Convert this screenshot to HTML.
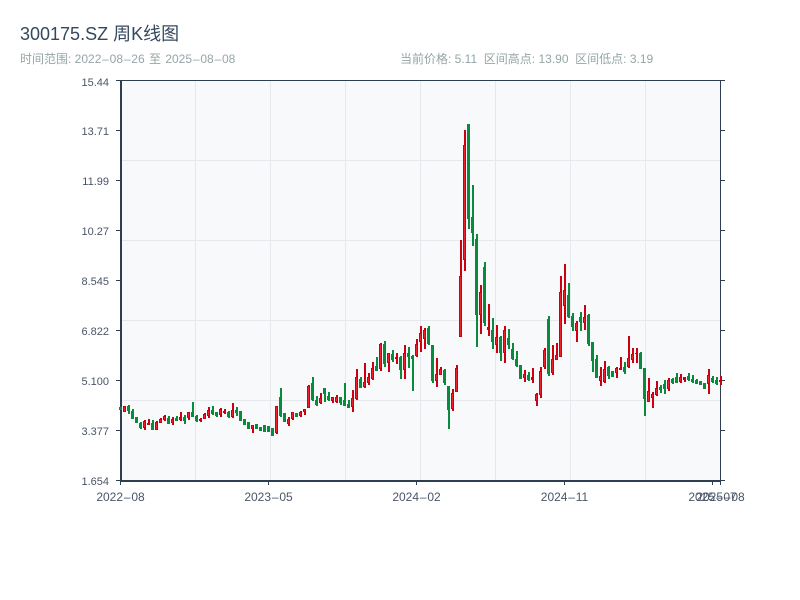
<!DOCTYPE html>
<html><head><meta charset="utf-8"><style>
html,body{margin:0;padding:0;background:#fff;width:800px;height:600px;overflow:hidden}
svg{display:block}
text{font-family:"WenQuanYi Zen Hei","Liberation Sans","Noto Sans CJK SC",sans-serif}
</style></head><body>
<svg width="800" height="600" viewBox="0 0 800 600" xmlns="http://www.w3.org/2000/svg">
<rect x="120" y="80" width="600" height="400" fill="#f7f9fb"/>
<path d="M195.500 80V480M270.500 80V480M345.500 80V480M420.500 80V480M495.500 80V480M570.500 80V480M645.500 80V480M120 160.500H720M120 240.500H720M120 320.500H720M120 400.500H720" stroke="#e5e8ed" fill="none"/>
<path d="M116 80.500H725M720.500 80V481M720 130.500H725M720 180.500H725M720 230.500H725M720 280.500H725M720 330.500H725M720 380.500H725M720 430.500H725M720 480.500H725M116 130.500H120M116 180.500H120M116 230.500H120M116 280.500H120M116 330.500H120M116 380.500H120M116 430.500H120M116 480.500H120M120.500 481V485M268.500 481V485M416.500 481V485M564.500 481V485M712.500 481V485M720.500 481V485" stroke="#2c3e50" fill="none"/>
<path d="M121 80V482M120 481H720" stroke="#2c3e50" stroke-width="2" fill="none"/>
<g fill="none">
<path stroke="#0a8a3c" stroke-width="2" d="M121 407V410M129 405V414M133 409V419M137 417V423M141 422V429M153 420V430M169 416V424M177 416V421M185 415V424M193 402V417M197 415V422M213 406V415M217 412V417M229 411V418M237 407V416M241 411V421M245 419V425M249 422V429M257 424V429M261 427V431M265 425V432M269 426V432M273 428V436M281 388V417M285 413V422M297 413V417M313 377V401M317 396V406M325 388V402M329 392V401M341 397V405M345 383V406M349 400V408M361 377V388M377 357V371M385 341V367M393 350V362M401 356V379M409 347V368M413 355V391M429 326V345M433 345V383M445 369V385M449 386V429M469 124V229M473 185V246M477 234V347M485 262V326M493 318V349M501 336V361M509 329V349M513 343V360M517 351V367M521 365V379M529 372V381M549 316V376M569 283V318M573 313V331M581 312V331M589 314V346M593 342V372M597 355V378M609 366V379M613 371V377M625 362V374M641 352V369M645 368V416M661 385V393M665 380V394M673 378V384M677 373V383M689 373V381M693 375V383M697 379V384M701 381V385M705 383V389M713 376V383M717 377V385"/>
<path stroke="#0a8a3c" stroke-width="3" d="M120.500 407V410M128.500 406V411M132.500 411V419M136.500 417V423M140.500 423V428M152.500 423V430M168.500 418V424M176.500 418V421M184.500 417V421M192.500 412V417M196.500 416V421M212.500 410V414M216.500 412V416M228.500 412V417M236.500 410V413M240.500 411V421M244.500 419V425M248.500 422V429M256.500 424V429M260.500 427V431M264.500 425V432M268.500 426V432M272.500 428V436M280.500 397V416M284.500 413V422M296.500 413V417M312.500 383V400M316.500 400V405M324.500 388V394M328.500 396V400M340.500 397V403M344.500 400V406M348.500 404V408M360.500 379V388M376.500 366V371M384.500 344V364M392.500 354V360M400.500 357V370M408.500 353V357M412.500 356V359M428.500 328V344M432.500 345V381M444.500 370V383M448.500 386V410M468.500 124V219M472.500 217V233M476.500 239V315M484.500 267V323M492.500 330V342M500.500 337V353M508.500 338V345M512.500 349V359M516.500 359V366M520.500 365V379M528.500 375V380M548.500 319V374M568.500 295V317M572.500 316V327M580.500 317V322M588.500 315V344M592.500 342V361M596.500 359V378M608.500 367V376M612.500 371V377M624.500 367V372M640.500 353V369M644.500 368V399M660.500 387V390M664.500 384V389M672.500 379V383M676.500 377V383M688.500 376V380M692.500 379V382M696.500 380V384M700.500 381V385M704.500 383V389M712.500 378V382M716.500 380V384"/>
<path stroke="#cc0010" stroke-width="2" d="M125 406V412M145 420V430M149 419V425M157 421V430M161 418V423M165 415V421M173 417V425M181 412V421M189 412V420M201 418V422M205 413V419M209 407V418M221 408V417M225 409V414M233 403V418M253 425V433M277 406V434M289 417V426M293 412V420M301 411V417M305 409V415M309 385V408M321 393V404M333 397V403M337 395V403M353 390V412M357 369V400M365 363V388M369 373V385M373 362V380M381 343V371M389 353V372M397 353V364M405 345V379M417 339V357M421 326V352M425 328V349M437 358V387M441 367V375M453 389V411M457 365V392M461 240V337M465 130V271M481 285V334M489 304V336M497 325V353M505 326V363M525 370V382M533 368V383M537 393V406M541 367V398M545 348V369M553 345V375M557 343V360M561 276V357M565 264V324M577 321V342M585 305V330M601 367V386M605 361V383M617 367V378M621 357V370M629 336V368M633 348V363M637 348V363M649 378V402M653 392V408M657 381V396M669 378V391M681 374V383M685 377V382M709 369V394M721 376V385"/>
<path stroke="#cc0010" stroke-width="3" d="M124.500 406V412M144.500 421V428M148.500 423V425M156.500 422V430M160.500 419V423M164.500 416V420M172.500 419V423M180.500 417V420M188.500 412V418M200.500 419V421M204.500 414V419M208.500 410V416M220.500 409V415M224.500 411V413M232.500 410V417M252.500 425V429M276.500 406V433M288.500 419V424M292.500 412V419M300.500 412V416M304.500 409V412M308.500 386V408M320.500 398V403M332.500 397V401M336.500 397V402M352.500 398V407M356.500 377V399M364.500 382V387M368.500 377V383M372.500 368V379M380.500 344V369M388.500 353V363M396.500 357V359M404.500 353V370M416.500 344V356M420.500 333V342M424.500 330V339M436.500 374V381M440.500 369V375M452.500 393V409M456.500 368V392M460.500 276V337M464.500 145V260M480.500 292V315M488.500 327V330M496.500 337V345M504.500 330V353M524.500 374V378M532.500 377V380M536.500 394V401M540.500 371V395M544.500 350V367M552.500 359V373M556.500 355V360M560.500 292V357M564.500 290V306M576.500 323V331M584.500 317V323M600.500 376V381M604.500 369V382M616.500 368V373M620.500 368V370M628.500 358V367M632.500 354V360M636.500 353V354M648.500 391V402M652.500 394V398M656.500 388V395M668.500 380V389M680.500 377V382M684.500 377V380M708.500 375V384M720.500 380V382"/>
<path stroke="#f0202a" stroke-width="1" d="M124.500 407V411M144.500 422V427M156.500 423V429M160.500 420V422M164.500 417V419M172.500 420V422M188.500 413V417M204.500 415V418M208.500 411V415M220.500 410V414M232.500 411V416M252.500 426V428M276.500 407V432M288.500 420V423M292.500 413V418M300.500 413V415M304.500 410V411M308.500 387V407M320.500 399V402M332.500 398V400M336.500 398V401M352.500 399V406M356.500 378V398M364.500 383V386M368.500 378V382M372.500 369V378M380.500 345V368M388.500 354V362M404.500 354V369M416.500 345V355M420.500 334V341M424.500 331V338M436.500 375V380M440.500 370V374M452.500 394V408M456.500 369V391M460.500 277V336M464.500 146V259M480.500 293V314M496.500 338V344M504.500 331V352M524.500 375V377M536.500 395V400M540.500 372V394M544.500 351V366M552.500 360V372M556.500 356V359M560.500 293V356M564.500 291V305M576.500 324V330M584.500 318V322M600.500 377V380M604.500 370V381M616.500 369V372M628.500 359V366M632.500 355V359M648.500 392V401M652.500 395V397M656.500 389V394M668.500 381V388M680.500 378V381M708.500 376V383"/>
</g>
<text x="20" y="40" font-size="18" fill="#34495e">300175.SZ 周K线图</text>
<text x="20" y="63" font-size="12" fill="#95a5a6">时间范围: 2022<tspan dx="0.8">–</tspan><tspan dx="0.8">08</tspan><tspan dx="0.8">–</tspan><tspan dx="0.8">26 </tspan><tspan dx="1">至 </tspan><tspan dx="1">2025</tspan><tspan dx="0.8">–</tspan><tspan dx="0.8">08</tspan><tspan dx="0.8">–</tspan><tspan dx="0.8">08</tspan></text>
<text x="400" y="63" font-size="12" fill="#95a5a6" xml:space="preserve">当前价格: 5.11  区间高点: 13.90  区间低点: 3.19</text>
<g font-size="11" fill="#4a5568" text-anchor="end">
<text x="109" y="86">15.44</text><text x="109" y="135">13.71</text><text x="109" y="185">11.99</text><text x="109" y="235">10.27</text><text x="109" y="285">8.545</text><text x="109" y="335">6.822</text><text x="109" y="385">5.100</text><text x="109" y="435">3.377</text><text x="109" y="485">1.654</text>
</g>
<g font-size="12" fill="#4a5568" text-anchor="middle">
<text x="120.500" y="501">2022<tspan dx="0.8">–</tspan><tspan dx="0.8">08</tspan></text><text x="268.500" y="501">2023<tspan dx="0.8">–</tspan><tspan dx="0.8">05</tspan></text><text x="416.500" y="501">2024<tspan dx="0.8">–</tspan><tspan dx="0.8">02</tspan></text><text x="564.500" y="501">2024<tspan dx="0.8">–</tspan><tspan dx="0.8">11</tspan></text><text x="712.500" y="501">2025<tspan dx="0.8">–</tspan><tspan dx="0.8">07</tspan></text><text x="720.500" y="501">2025<tspan dx="0.8">–</tspan><tspan dx="0.8">08</tspan></text>
</g>
</svg>
</body></html>
